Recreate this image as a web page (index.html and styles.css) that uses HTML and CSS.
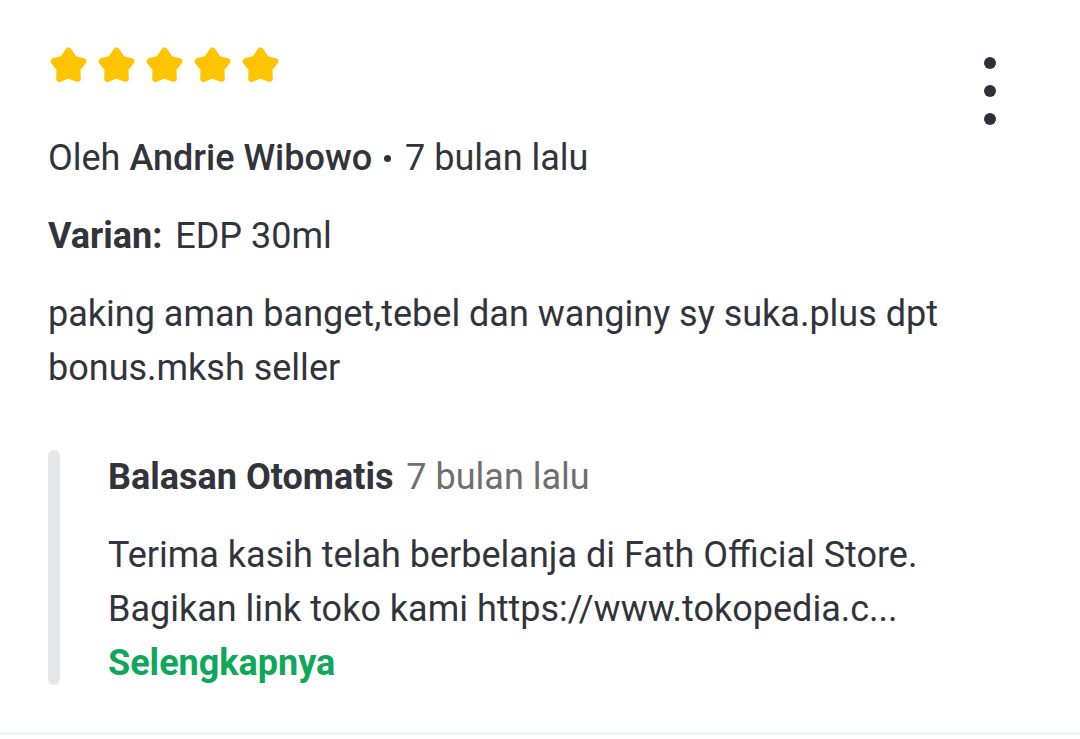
FILE: index.html
```html
<!DOCTYPE html>
<html>
    <head>
        <title>Ulasan</title>
        <meta charset="UTF-8">
        <link rel="stylesheet" href="styles.css">
    </head>
    <body>
        <div id="review">
            <div class="content">
                <div class="stars">
                    <svg class="star" viewBox="0 0 24 24"><path d="M12 3.5L15.29 8.47 21.03 10.06 17.33 14.73 17.58 20.69 12 18.6 6.42 20.69 6.67 14.73 2.97 10.06 8.71 8.47z"/></svg>
                    <svg class="star" viewBox="0 0 24 24"><path d="M12 3.5L15.29 8.47 21.03 10.06 17.33 14.73 17.58 20.69 12 18.6 6.42 20.69 6.67 14.73 2.97 10.06 8.71 8.47z"/></svg>
                    <svg class="star" viewBox="0 0 24 24"><path d="M12 3.5L15.29 8.47 21.03 10.06 17.33 14.73 17.58 20.69 12 18.6 6.42 20.69 6.67 14.73 2.97 10.06 8.71 8.47z"/></svg>
                    <svg class="star" viewBox="0 0 24 24"><path d="M12 3.5L15.29 8.47 21.03 10.06 17.33 14.73 17.58 20.69 12 18.6 6.42 20.69 6.67 14.73 2.97 10.06 8.71 8.47z"/></svg>
                    <svg class="star" viewBox="0 0 24 24"><path d="M12 3.5L15.29 8.47 21.03 10.06 17.33 14.73 17.58 20.69 12 18.6 6.42 20.69 6.67 14.73 2.97 10.06 8.71 8.47z"/></svg>
                </div>
                <div class="meta">Oleh <b>Andrie Wibowo</b><span class="dot"></span>7 bulan lalu</div>
                <div class="varian"><b>Varian:</b> EDP 30ml</div>
                <div class="text">paking aman banget,tebel dan wanginy sy suka.plus dpt bonus.mksh seller</div>
                <div class="reply">
                    <div class="bar"></div>
                    <div class="reply-body">
                        <div class="reply-head"><b>Balasan Otomatis</b> <span class="time">7 bulan lalu</span></div>
                        <div class="reply-text">Terima kasih telah berbelanja di Fath Official Store. Bagikan link toko kami https://www.tokopedia.c...</div>
                        <div class="more">Selengkapnya</div>
                    </div>
                </div>
            </div>
            <div class="kebab">
                <span></span><span></span><span></span>
            </div>
        </div>
        <div class="divider"></div>
    </body>
</html>
```

FILE: styles.css
```css
body{
    margin: 0;
    background: #fff;
    font-family: Roboto, "Noto Sans", sans-serif;
    color: #31353b;
}
#review{
    display: flex;
    padding: 45px 0 0 48px;
    height: 688px;
    box-sizing: border-box;
}
.content{
    flex: 1;
    font-size: 36px;
    line-height: 54px;
}
.stars{
    display: flex;
    gap: 9px;
    height: 38px;
    margin-left: 1px;
}
.star{
    width: 39px;
    height: 39px;
}
.star path{
    fill: #ffc400;
    stroke: #ffc400;
    stroke-width: 4;
    stroke-linejoin: round;
}
.meta{
    margin-top: 48px;
}
.meta b, .varian b, .reply-head b{
    font-weight: 500;
}
.dot{
    display: inline-block;
    width: 7px;
    height: 7px;
    border-radius: 50%;
    background: #31353b;
    vertical-align: middle;
    margin: 0 14px 4px 12px;
}
.varian{
    margin-top: 24px;
}
.varian b{
    font-weight: 700;
    margin-right: 4px;
}
.text{
    margin-top: 24px;
    width: 920px;
}
.reply{
    display: flex;
    margin-top: 55px;
}
.bar{
    width: 12px;
    height: 235px;
    border-radius: 6px;
    background: #e4e7eb;
}
.reply-body{
    padding-left: 48px;
    width: 830px;
}
.reply-head b{
    font-weight: 700;
}
.time{
    color: #6f6f6f;
    margin-left: 4px;
}
.reply-text{
    margin-top: 24px;
}
.more{
    color: #0fa85a;
    font-weight: 700;
    line-height: 54px;
}
.kebab{
    width: 90px;
    padding-top: 12px;
    display: flex;
    flex-direction: column;
    gap: 16px;
    align-items: flex-start;
}
.kebab span{
    width: 12px;
    height: 12px;
    border-radius: 50%;
    background: #2e3137;
    margin-left: -6px;
}
.divider{
    height: 3px;
    margin-top: 44px;
    background: #f0f3f7;
}
```
